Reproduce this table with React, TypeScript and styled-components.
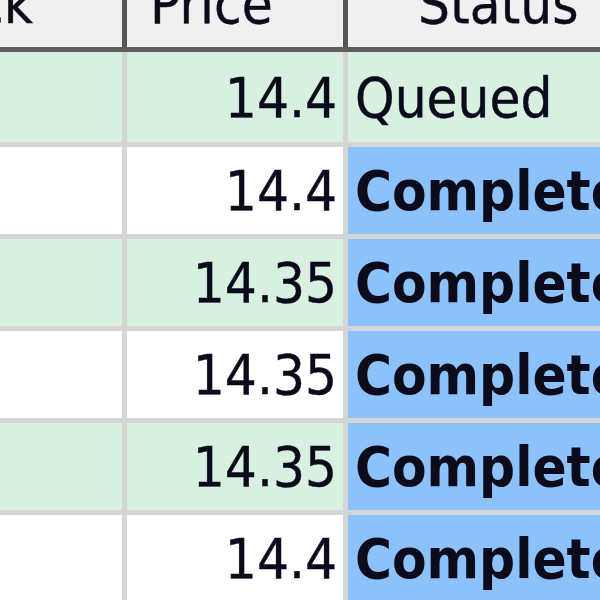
import styled, { createGlobalStyle } from "styled-components";

const GlobalStyle = createGlobalStyle`
  html, body {
    margin: 0;
    padding: 0;
    background: #ffffff;
    overflow: hidden;
  }
`;

const FONT = `"DejaVu Sans Condensed", "DejaVu Sans", "Liberation Sans", sans-serif`;

const Viewport = styled.div`
  width: 600px;
  height: 600px;
  overflow: hidden;
  font-family: ${FONT};
  font-stretch: condensed;
  font-size: 56px;
  color: #0b0b1c;
`;

// grid is scrolled: part of the first column and the header sit outside the view
const Grid = styled.div`
  display: flex;
  flex-direction: column;
  width: 900px;
  margin-top: -41px;
`;

const HeaderRow = styled.div`
  display: flex;
  height: 88px;
  background: #f0f0f0;
  border-bottom: 5px solid #5e5e5e;
`;

const HeaderCell = styled.div<{ $width?: number; $pad?: number; $end?: boolean }>`
  display: flex;
  align-items: center;
  justify-content: ${(p) => (p.$end ? "flex-end" : "flex-start")};
  flex: ${(p) => (p.$width ? `0 0 ${p.$width}px` : "1 1 auto")};
  box-sizing: border-box;
  overflow: hidden;
  white-space: nowrap;
  padding-left: ${(p) => (p.$end ? 0 : p.$pad ?? 0)}px;
  padding-right: ${(p) => (p.$end ? p.$pad ?? 0 : 0)}px;
  border-right: ${(p) => (p.$width ? "5px solid #565656" : "none")};
  -webkit-text-stroke: 0.4px #0b0b1c;
`;

const Row = styled.div<{ $height: number }>`
  display: flex;
  height: ${(p) => p.$height}px;
  border-bottom: 5px solid #d5d5d5;
`;

type Tone = "green" | "white" | "blue";

const toneColor: Record<Tone, string> = {
  green: "#d8f0df",
  white: "#ffffff",
  blue: "#8cc1f9",
};

const Cell = styled.div<{ $width?: number; $tone: Tone; $right?: boolean; $bold?: boolean }>`
  display: flex;
  align-items: center;
  justify-content: ${(p) => (p.$right ? "flex-end" : "flex-start")};
  flex: ${(p) => (p.$width ? `0 0 ${p.$width}px` : "1 1 auto")};
  box-sizing: border-box;
  background: ${(p) => toneColor[p.$tone]};
  font-weight: ${(p) => (p.$bold ? 700 : 400)};
  -webkit-text-stroke: ${(p) => (p.$bold ? "0" : "0.4px #0b0b1c")};
  white-space: nowrap;
  overflow: hidden;
  padding: ${(p) => (p.$right ? "0 6px 0 0" : "0 0 0 7px")};
  border-right: ${(p) => (p.$width ? "5px solid #d5d5d5" : "none")};
`;

const orders = [
  { price: "14.4", status: "Queued" },
  { price: "14.4", status: "Completed" },
  { price: "14.35", status: "Completed" },
  { price: "14.35", status: "Completed" },
  { price: "14.35", status: "Completed" },
  { price: "14.4", status: "Completed" },
];

export default function App() {
  return (
    <>
      <GlobalStyle />
      <Viewport>
        <Grid>
          <HeaderRow>
            <HeaderCell $width={127} $pad={89} $end>
              Stock
            </HeaderCell>
            <HeaderCell $width={221} $pad={23}>
              Price
            </HeaderCell>
            <HeaderCell $pad={70}>Status</HeaderCell>
          </HeaderRow>
          {orders.map((o, i) => {
            const tone: Tone = i % 2 === 0 ? "green" : "white";
            const done = o.status === "Completed";
            return (
              <Row key={i} $height={i === 0 ? 90 : 87}>
                <Cell $width={127} $tone={tone} />
                <Cell $width={221} $tone={tone} $right>
                  {o.price}
                </Cell>
                <Cell $tone={done ? "blue" : tone} $bold={done}>
                  {o.status}
                </Cell>
              </Row>
            );
          })}
        </Grid>
      </Viewport>
    </>
  );
}
